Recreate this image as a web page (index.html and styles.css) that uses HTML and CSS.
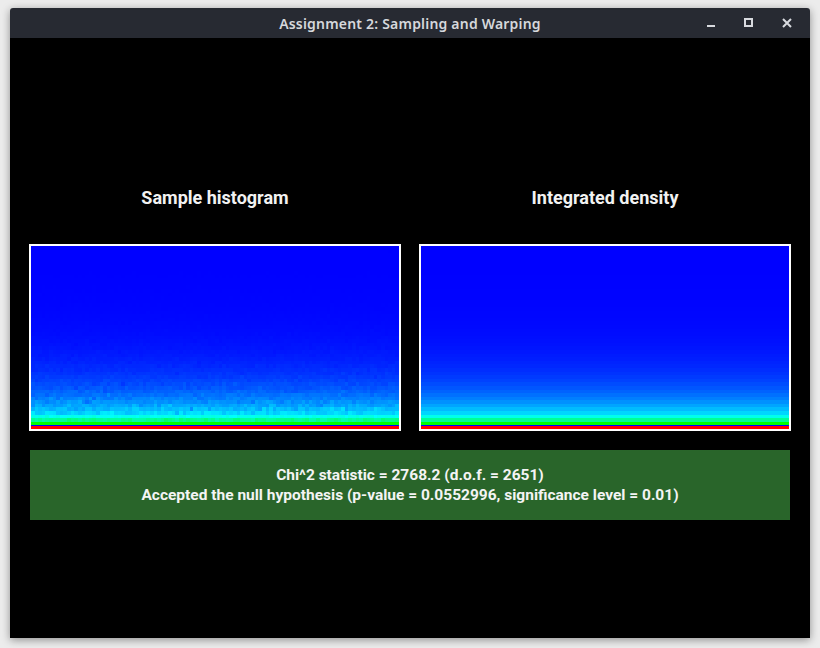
FILE: index.html
```html
<!DOCTYPE html>
<html>
<head>
<meta charset="utf-8">
<link rel="stylesheet" href="styles.css">
</head>
<body>
<div class="window">
  <div class="titlebar">
    <span class="title">Assignment 2: Sampling and Warping</span>
    <div class="controls">
      <svg class="ctl" width="10" height="10" viewBox="0 0 10 10"><rect x="1" y="7" width="8" height="2" fill="#d8dadf"/></svg>
      <svg class="ctl" width="10" height="10" viewBox="0 0 10 10"><rect x="1" y="1" width="7" height="7" fill="none" stroke="#d8dadf" stroke-width="2"/></svg>
      <svg class="ctl" width="10" height="10" viewBox="0 0 10 10"><path d="M1 1 L9 9 M9 1 L1 9" stroke="#d8dadf" stroke-width="2" fill="none"/></svg>
    </div>
  </div>
  <div class="content">
    <div class="panels">
      <div class="panel">
        <div class="heading">Sample histogram</div>
        <div class="frame"><canvas id="hist" width="368" height="183"></canvas></div>
      </div>
      <div class="panel">
        <div class="heading">Integrated density</div>
        <div class="frame"><canvas id="dens" width="368" height="183"></canvas></div>
      </div>
    </div>
    <div class="result">
      <div>Chi^2 statistic = 2768.2 (d.o.f. = 2651)</div>
      <div>Accepted the null hypothesis (p-value = 0.0552996, significance level = 0.01)</div>
    </div>
  </div>
</div>
<script src="script.js"></script>
</body>
</html>
```

FILE: styles.css
```css
html, body {
  margin: 0;
  padding: 0;
}
body {
  background: #ececec;
  padding: 8px 10px 10px 10px;
  width: 800px;
  height: 630px;
}
.window {
  width: 800px;
  height: 630px;
  display: flex;
  flex-direction: column;
  box-shadow: 0 2px 8px rgba(0, 0, 0, 0.4);
  border-radius: 3px 3px 0 0;
  overflow: hidden;
}
.titlebar {
  height: 30px;
  flex: none;
  background: #272a32;
  display: flex;
  align-items: center;
  justify-content: center;
  position: relative;
}
.title {
  font-family: "Noto Sans", "DejaVu Sans", sans-serif;
  font-weight: 600;
  font-size: 14px;
  color: #d6d8dc;
  letter-spacing: 0.2px;
}
.controls {
  position: absolute;
  right: 18px;
  top: 10px;
  display: flex;
  gap: 28px;
}
.ctl {
  display: block;
}
.content {
  flex: 1;
  background: #000;
  padding: 0 19px;
  display: flex;
  flex-direction: column;
}
.panels {
  display: flex;
  gap: 18px;
  padding-top: 148px;
}
.panel {
  width: 372px;
  display: flex;
  flex-direction: column;
  align-items: center;
}
.heading {
  font-family: Roboto, "Liberation Sans", sans-serif;
  font-weight: 700;
  font-size: 18px;
  line-height: 24px;
  height: 24px;
  color: #f2f2f2;
  margin-bottom: 34px;
}
.frame {
  width: 368px;
  height: 183px;
  border: 2px solid #fff;
}
.frame canvas {
  display: block;
}
.result {
  margin: 19px 1px 0 1px;
  height: 70px;
  background: #29652a;
  color: #f4f4f4;
  font-family: Roboto, "Liberation Sans", sans-serif;
  font-weight: 700;
  font-size: 15.5px;
  line-height: 20px;
  display: flex;
  flex-direction: column;
  align-items: center;
  justify-content: center;
}
```

FILE: script.js
```js
(function () {
  var COLS = 102, ROWS = 51, W = 368, H = 183;
  var seed = 12345;
  function rand() {
    seed = (seed * 1103515245 + 12345) & 0x7fffffff;
    return seed / 0x7fffffff;
  }
  function gauss() {
    var u = rand() || 1e-6, v = rand();
    return Math.sqrt(-2 * Math.log(u)) * Math.cos(2 * Math.PI * v);
  }
  function baseColor(r) {
    if (r === 0) return [255, 0, 0];
    if (r === 1) return [0, 255, 0];
    if (r === 2) return [0, 255, 150];
    if (r === 3) return [0, 255, 236];
    return [0, 214 * Math.exp(-(r - 4) * 0.13), 255];
  }
  function draw(id, noisy) {
    var c = document.getElementById(id);
    if (!c) return;
    var ctx = c.getContext('2d');
    ctx.fillStyle = '#0000ff';
    ctx.fillRect(0, 0, W, H);
    for (var r = 0; r < ROWS; r++) {
      var y1 = Math.round(H - r * H / ROWS);
      var y0 = Math.round(H - (r + 1) * H / ROWS);
      if (r === 0) y0 = y1 - 3;
      for (var k = 0; k < COLS; k++) {
        var x0 = Math.round(k * W / COLS);
        var x1 = Math.round((k + 1) * W / COLS);
        var col = baseColor(r).slice();
        if (noisy) {
          if (r === 2) {
            col[2] = Math.max(100, Math.min(200, col[2] + gauss() * 15));
          } else if (r === 3) {
            col[2] = Math.max(215, Math.min(255, col[2] + gauss() * 8));
          } else if (r >= 4) {
            col[1] = Math.max(0, Math.min(255, col[1] * (1 + 0.07 * gauss())));
          }
        }
        ctx.fillStyle = 'rgb(' + Math.round(col[0]) + ',' + Math.round(col[1]) + ',' + Math.round(col[2]) + ')';
        ctx.fillRect(x0, y0, x1 - x0, y1 - y0);
      }
    }
  }
  draw('hist', true);
  draw('dens', false);
})();
```
